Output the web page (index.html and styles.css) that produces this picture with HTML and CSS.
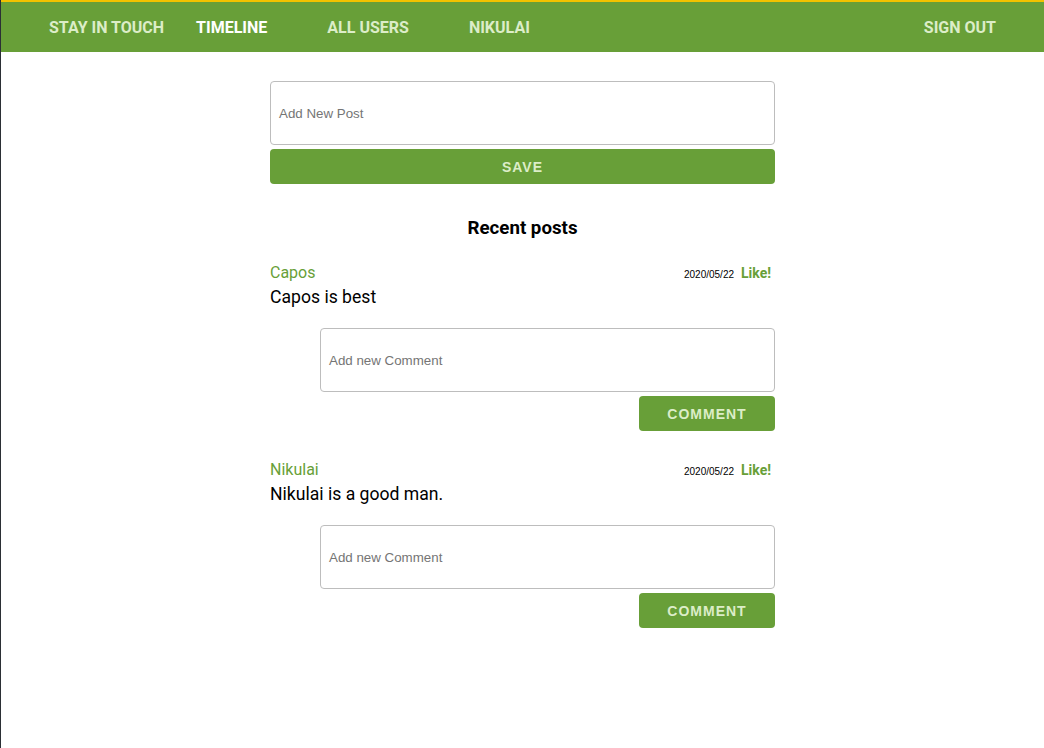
FILE: index.html
```html
<!DOCTYPE html>
<html>
<head>
<meta charset="utf-8">
<link rel="stylesheet" href="styles.css">
</head>
<body>
<nav class="nav">
  <a class="brand">STAY IN TOUCH</a>
  <a class="link active">TIMELINE</a>
  <a class="link">ALL USERS</a>
  <a class="link">NIKULAI</a>
  <span class="spacer"></span>
  <a class="signout">SIGN OUT</a>
</nav>
<main class="main">
  <form class="new-post">
    <textarea class="field" placeholder="Add New Post"></textarea>
    <button class="btn btn-full" type="button">SAVE</button>
  </form>
  <h2 class="title">Recent posts</h2>

  <div class="post">
    <div class="post-head">
      <span class="author">Capos</span>
      <span class="meta"><span class="date">2020/05/22</span><a class="like">Like!</a></span>
    </div>
    <p class="body">Capos is best</p>
    <div class="comment-form">
      <textarea class="field" placeholder="Add new Comment"></textarea>
      <button class="btn btn-comment" type="button">COMMENT</button>
    </div>
  </div>

  <div class="post">
    <div class="post-head">
      <span class="author">Nikulai</span>
      <span class="meta"><span class="date">2020/05/22</span><a class="like">Like!</a></span>
    </div>
    <p class="body">Nikulai is a good man.</p>
    <div class="comment-form">
      <textarea class="field" placeholder="Add new Comment"></textarea>
      <button class="btn btn-comment" type="button">COMMENT</button>
    </div>
  </div>
</main>
</body>
</html>
```
FILE: styles.css
```css
* { box-sizing: border-box; }
html, body { margin: 0; padding: 0; }
body {
  font-family: Roboto, "Liberation Sans", sans-serif;
  background: #fff;
  border-left: 1px solid #2b2f35;
  min-height: 748px;
}
.nav {
  display: flex;
  align-items: center;
  height: 52px;
  background: #689f38;
  border-top: 2px solid #f2c200;
  padding: 0 48px 0 48px;
  font-weight: 700;
  font-size: 16px;
  color: #dcedc8;
}
.nav a { cursor: pointer; }
.brand { margin-right: 2px; }
.link { padding: 0 30px; }
.link.active { color: #fff; }
.spacer { flex: 1; }
.main {
  width: 505px;
  margin: 29px auto 0;
}
.new-post { display: flex; flex-direction: column; gap: 4px; margin: 0; }
.field {
  display: block;
  width: 100%;
  height: 64px;
  border: 1px solid #bdbdbd;
  border-radius: 4px;
  padding: 24px 8px 22px;
  font-family: "Liberation Sans", Arial, sans-serif;
  font-size: 13.333px;
  resize: none;
  outline: none;
}
.field::placeholder { color: #757575; }
.btn {
  height: 35px;
  border: none;
  border-radius: 4px;
  background: #689f38;
  color: #dcedc8;
  font-family: "Liberation Sans", Arial, sans-serif;
  font-weight: 700;
  font-size: 14px;
  letter-spacing: 1px;
}
.btn-full { width: 100%; }
.title {
  text-align: center;
  font-size: 18.72px;
  font-weight: 700;
  margin: 34px 0 25px;
  line-height: 20px;
}
.post { margin-bottom: 29px; }
.post-head {
  display: flex;
  justify-content: space-between;
  align-items: baseline;
  height: 23px;
}
.author { color: #689f38; font-size: 16px; }
.meta { display: flex; align-items: baseline; gap: 7px; padding-right: 4px; }
.date { font-family: "Liberation Sans", Arial, sans-serif; font-size: 10px; color: #000; }
.like { color: #689f38; font-weight: 700; font-size: 14px; }
.body { margin: 0 0 20px; font-size: 17.6px; line-height: 22px; color: #000; }
.comment-form {
  display: flex;
  flex-direction: column;
  align-items: flex-end;
  gap: 4px;
  padding-left: 50px;
}
.btn-comment { width: 136px; }
```
